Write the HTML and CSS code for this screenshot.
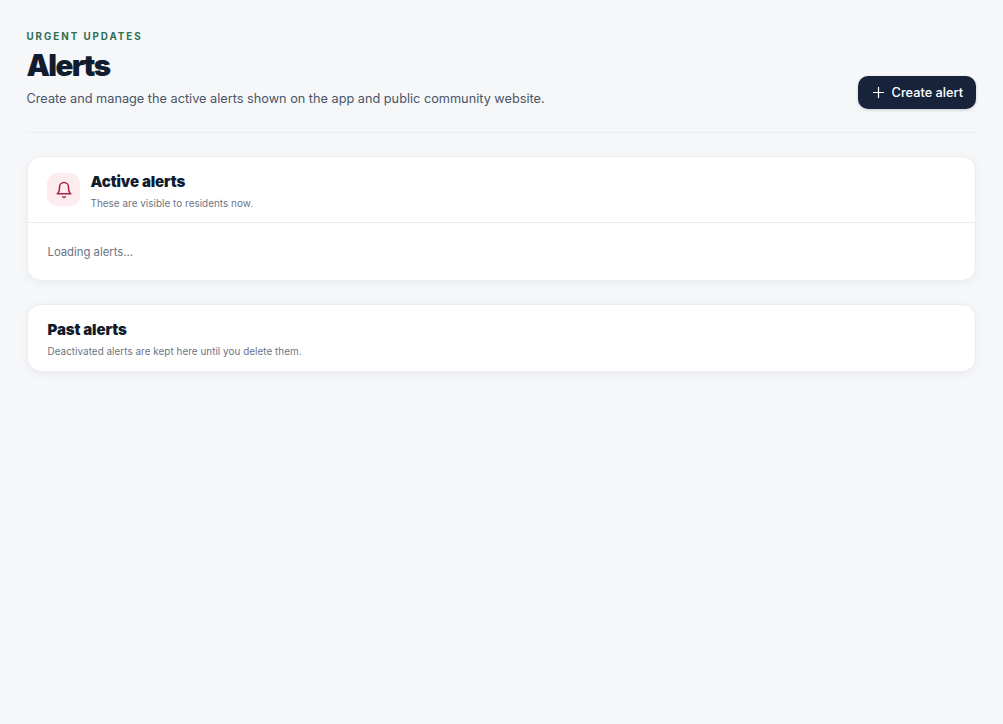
FILE: index.html
```html
<!DOCTYPE html>
<html>
<head>
	<meta charset="utf-8">
	<title>Alerts</title>
	<link rel="stylesheet" href="styles.css">
</head>
<body>
	<header class="top">
		<div class="top-text">
			<p class="eyebrow">URGENT UPDATES</p>
			<h1>Alerts</h1>
			<p class="lead">Create and manage the active alerts shown on the app and public community website.</p>
		</div>
		<button class="create">
			<svg width="13" height="13" viewBox="0 0 14 14" fill="none" stroke="currentColor" stroke-width="1.3" stroke-linecap="round"><path d="M7 1.5v11M1.5 7h11"/></svg>
			Create alert
		</button>
	</header>

	<section class="card">
		<div class="card-head with-line">
			<div class="bell">
				<svg width="18" height="18" viewBox="0 0 24 24" fill="none" stroke="currentColor" stroke-width="2" stroke-linecap="round" stroke-linejoin="round"><path d="M6 8a6 6 0 0 1 12 0c0 7 3 9 3 9H3s3-2 3-9"/><path d="M10.3 21a1.94 1.94 0 0 0 3.4 0"/></svg>
			</div>
			<div>
				<h2>Active alerts</h2>
				<p class="sub">These are visible to residents now.</p>
			</div>
		</div>
		<p class="loading">Loading alerts...</p>
	</section>

	<section class="card">
		<div class="card-head past">
			<div>
				<h2>Past alerts</h2>
				<p class="sub">Deactivated alerts are kept here until you delete them.</p>
			</div>
		</div>
	</section>
</body>
</html>
```

FILE: styles.css
```css
body{
	margin: 0;
	padding: 30px 27px 0 26.5px;
	background-color: #F5F7F9;
	font-family: Inter, "Liberation Sans", sans-serif;
	color: #111C2E;
}
.top{
	display: flex;
	justify-content: space-between;
	align-items: flex-end;
	padding-bottom: 23px;
	border-bottom: 1px solid #ECEEF1;
	margin-bottom: 23px;
}
.eyebrow{
	margin: 0;
	font-size: 9.8px;
	line-height: 13px;
	font-weight: 700;
	letter-spacing: 1.95px;
	color: #2F6F55;
}
h1{
	margin: 4px 0 0;
	font-size: 29.5px;
	line-height: 36px;
	font-weight: 900;
	letter-spacing: -1.6px;
}
.lead{
	margin: 6px 0 0;
	font-size: 12.72px;
	line-height: 20px;
	color: #4A5568;
}
.create{
	display: flex;
	align-items: center;
	gap: 7px;
	height: 33px;
	padding: 0 13px 0 14px;
	background-color: #16233A;
	color: #fff;
	border: none;
	border-radius: 10px;
	font-family: inherit;
	font-size: 12.75px;
	font-weight: 500;
	box-shadow: 0 1px 3px rgba(17,28,46,.2);
}
.card{
	background-color: #fff;
	border: 1px solid #EBEDF0;
	border-radius: 14px;
	box-shadow: 0 2px 10px rgba(17,28,46,.05);
	margin-bottom: 23px;
}
.card-head{
	display: flex;
	align-items: flex-start;
	padding: 15px 20px 12px 20px;
}
.past{
	padding-bottom: 13px;
}
.with-line{
	gap: 10.5px;
	padding-left: 19.5px;
	border-bottom: 1px solid #EBEDF0;
}
.bell{
	display: flex;
	align-items: center;
	justify-content: center;
	width: 33px;
	height: 33px;
	margin-top: 1px;
	border-radius: 10px;
	background-color: #FDECEF;
	color: #A8234A;
}
h2{
	margin: 0;
	font-size: 15px;
	line-height: 20px;
	font-weight: 900;
	letter-spacing: -.1px;
}
.sub{
	margin: 4px 0 0;
	font-size: 9.9px;
	line-height: 14px;
	letter-spacing: .04px;
	color: #6B7485;
}
.loading{
	margin: 0;
	padding: 21px 20px 20px;
	font-size: 11.3px;
	line-height: 16px;
	color: #6B7485;
}
```
